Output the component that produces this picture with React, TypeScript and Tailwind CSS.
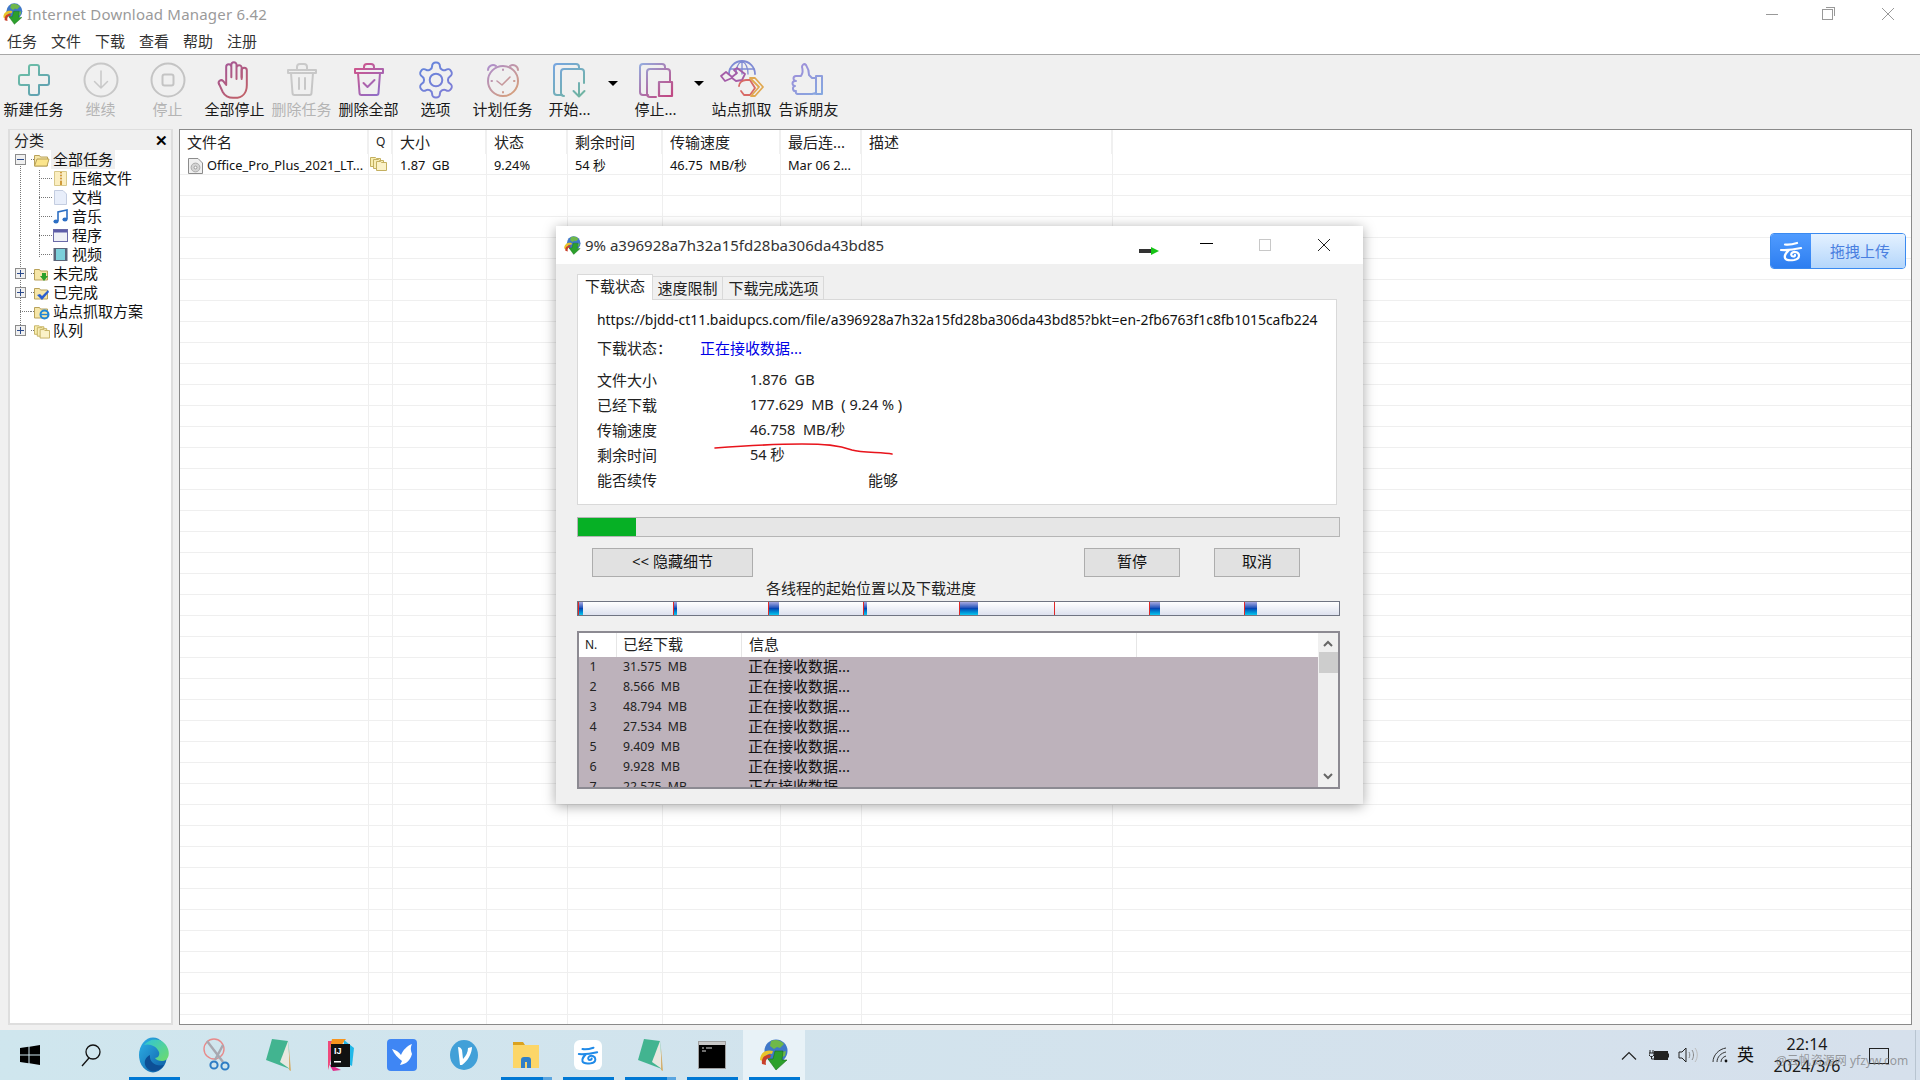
import type { ReactNode } from "react";

// --- toolbar icons: thin outlines with a two-colour gradient ---
const Grad = ({ id, from, to, size = 40, children }: { id: string; from: string; to: string; size?: number; children: ReactNode }) => (
  <svg width={size} height={size} viewBox="0 0 40 40" fill="none" stroke={`url(#${id})`} strokeWidth="2" strokeLinecap="round" strokeLinejoin="round">
    <defs>
      <linearGradient id={id} gradientUnits="userSpaceOnUse" x1="0" y1="2" x2="30" y2="38">
        <stop offset="0" stopColor={from} />
        <stop offset="1" stopColor={to} />
      </linearGradient>
    </defs>
    {children}
  </svg>
);

const toolIcons: Record<string, ReactNode> = {
  add: (
    <Grad id="g-add" from="#6fc8a2" to="#5f9cb4">
      <path d="M17 5h6a2 2 0 0 1 2 2v8h8a2 2 0 0 1 2 2v6a2 2 0 0 1-2 2h-8v8a2 2 0 0 1-2 2h-6a2 2 0 0 1-2-2v-8H7a2 2 0 0 1-2-2v-6a2 2 0 0 1 2-2h8V7a2 2 0 0 1 2-2z" />
    </Grad>
  ),
  resume: (
    <Grad id="g-res" from="#c8c8c8" to="#c8c8c8">
      <circle cx="20" cy="20" r="16.5" />
      <path d="M20 11v17M13.5 21.5 20 28l6.5-6.5" strokeWidth="1.5" />
    </Grad>
  ),
  stop: (
    <Grad id="g-stop" from="#c4c4c4" to="#c4c4c4">
      <circle cx="20" cy="20" r="16.5" />
      <rect x="14.5" y="14.5" width="11" height="11" rx="2" />
    </Grad>
  ),
  hand: (
    <Grad id="g-hand" from="#a0559c" to="#dc6a3c">
      <g transform="translate(0 0) scale(1.72)" strokeWidth="1.16">
        <path d="M15.5 11V4.5a1.5 1.5 0 0 0-3 0V11M12.5 10V2.8a1.5 1.5 0 0 0-3 0V10M9.5 10V4a1.5 1.5 0 0 0-3 0v10.5l-1.8-2.3a1.5 1.5 0 0 0-2.3 1.9" />
        <path d="M15.5 10V6a1.5 1.5 0 0 1 3 0v8.5c0 4.5-2.5 7.5-7 7.5h-1c-3 0-4.8-1.2-6-3.4L2.4 14" />
      </g>
    </Grad>
  ),
  del: (
    <Grad id="g-del" from="#cdcdcd" to="#c4c4c4">
      <path d="M6 10h28v3H6zM9 13l1.5 20a2 2 0 0 0 2 2h15a2 2 0 0 0 2-2L31 13M15 10V7a3 3 0 0 1 3-3h4a3 3 0 0 1 3 3v3" />
      <path d="M17 18v11M23 18v11" />
    </Grad>
  ),
  delAll: (
    <Grad id="g-dela" from="#dc4f7e" to="#8c70cc">
      <path d="M6 9h28v4H6zM9 13l1.5 20a2 2 0 0 0 2 2h15a2 2 0 0 0 2-2L31 13M15 9V7a3 3 0 0 1 3-3h4a3 3 0 0 1 3 3v2" />
      <path d="m14.5 23 4 4 7-7" />
    </Grad>
  ),
  gear: (
    <Grad id="g-gear" from="#5f86dc" to="#9a78d2">
      <g transform="translate(-1 -1) scale(1.75)" strokeWidth="1.14">
        <path d="M12.22 2h-.44a2 2 0 0 0-2 2v.18a2 2 0 0 1-1 1.73l-.43.25a2 2 0 0 1-2 0l-.15-.08a2 2 0 0 0-2.73.73l-.22.38a2 2 0 0 0 .73 2.73l.15.1a2 2 0 0 1 1 1.72v.51a2 2 0 0 1-1 1.74l-.15.09a2 2 0 0 0-.73 2.73l.22.38a2 2 0 0 0 2.73.73l.15-.08a2 2 0 0 1 2 0l.43.25a2 2 0 0 1 1 1.73V20a2 2 0 0 0 2 2h.44a2 2 0 0 0 2-2v-.18a2 2 0 0 1 1-1.73l.43-.25a2 2 0 0 1 2 0l.15.08a2 2 0 0 0 2.73-.73l.22-.39a2 2 0 0 0-.73-2.73l-.15-.08a2 2 0 0 1-1-1.74v-.5a2 2 0 0 1 1-1.74l.15-.09a2 2 0 0 0 .73-2.73l-.22-.38a2 2 0 0 0-2.73-.73l-.15.08a2 2 0 0 1-2 0l-.43-.25a2 2 0 0 1-1-1.73V4a2 2 0 0 0-2-2z" />
        <circle cx="12" cy="12" r="3.6" />
      </g>
    </Grad>
  ),
  clock: (
    <Grad id="g-clock" from="#a88cd8" to="#d8a078">
      <circle cx="20" cy="21" r="15" />
      <path d="M5 10a5 5 0 0 1 8-4M35 10a5 5 0 0 0-8-4" />
      <path d="m14 21 5 4 8-8" strokeWidth="1.6" />
      <path d="M20 9.5v.5M20 32v.5M8.5 21h.5M31 21h.5" />
    </Grad>
  ),
  start: (
    <Grad id="g-start" from="#78a4e6" to="#6fb4a0">
      <path d="M12 35H7a3 3 0 0 1-3-3V7a3 3 0 0 1 3-3h19a3 3 0 0 1 3 3v2" />
      <path d="M14 36a3 3 0 0 1-3-3V12a3 3 0 0 1 3-3h17a3 3 0 0 1 3 3v11" />
      <path d="M29 23v13M23.5 31l5.5 5.5 5.5-5.5" />
    </Grad>
  ),
  halt: (
    <Grad id="g-halt" from="#90b4e6" to="#c04a84">
      <path d="M12 35H7a3 3 0 0 1-3-3V7a3 3 0 0 1 3-3h19a3 3 0 0 1 3 3v2" />
      <path d="M20 37h-6a3 3 0 0 1-3-3V12a3 3 0 0 1 3-3h17a3 3 0 0 1 3 3v9" />
      <rect x="23" y="22" width="13" height="14" strokeWidth="2.2" />
    </Grad>
  ),
  site: (
    <svg width="48" height="40" viewBox="0 0 48 40" fill="none" strokeWidth="1.8" strokeLinecap="round" strokeLinejoin="round">
      <g stroke="#7f8bd4">
        <path d="M11 14a13 13 0 0 1 26 0" />
        <path d="M24 1c-5 3-6 8-6 13M24 1c5 3 6 8 6 13M24 1v13M12 9h24" strokeWidth="1.3" />
      </g>
      <path d="M3 16 8 12l6 5 5-4-3-3 3-2 8 6-3 6-6 1-4-3-7 3z" stroke="#a45ca8" />
      <path d="M21 26c0-3 3-6 7-6h4l5 8-5 7h-6l-3-4" stroke="#d86a66" />
      <path d="m32 18 9 9-8 9h4l8-9-8-9z" stroke="#e0a850" />
    </svg>
  ),
  like: (
    <Grad id="g-like" from="#a48ad8" to="#84a8e0">
      <path d="M27 16h6v18h-6zM27 18h-4l-3-3c0-3-1-7-3-10-2-2-4 0-4 2 1 3 1 6-1 9H7a2 2 0 0 0 0 5h-1a2 2 0 0 0 0 5 2 2 0 0 0 1 5 2 2 0 0 0 2 3h14l4-1" />
    </Grad>
  ),
};

const IdmLogo = ({ size = 20 }: { size?: number }) => (
  <svg width={size} height={size} viewBox="0 0 32 32">
    <circle cx="18" cy="12" r="11.5" fill="#3f78c8" />
    <path d="M13 2c4-2 10-1 13 3l-4 4-3-1-3 2-4-3zM24 13l4-1-1 5-3 1z" fill="#6fb84a" />
    <path d="M2 21C2 13 9 10 15 12l-1 3C10 14 6 17 7 23z" fill="#e9c42a" />
    <path d="M4 25C3 19 7 15 13 16l-1 3c-3 0-5 2-4 7z" fill="#c8402a" />
    <path d="M17 12h8l-1 9h5l-11 10-8-11 5 0z" fill="#2ca02c" stroke="#1c6e1c" strokeWidth="0.6" />
  </svg>
);

const CloudGlyph = ({ color, size = 24 }: { color: string; size?: number }) => (
  <svg width={size} height={size} viewBox="0 0 24 24" fill="none" stroke={color} strokeWidth="2.2" strokeLinecap="round">
    <path d="M6 5.5c4 .6 8-.2 12-1.5M2 11c6 .4 13-.4 20-2M10 11c-3 3-5 5-4 8 1 2.5 5 2.5 9 2 3-.5 5-2 5-4.5 0-3-4-4.5-6.5-3-2 1.2-1.5 4 .5 4 1.2 0 2-.8 2-1.6" />
  </svg>
);

// --- tree icons ---
const Folder = ({ open, children }: { open?: boolean; children?: ReactNode }) => (
  <svg width="16" height="16" viewBox="0 0 16 16">
    <path d="M.5 3.5h5l1 1.5h7v9H.5z" fill="#f6e6a8" stroke="#b9a25a" />
    {open && <path d="M.5 14 3 7h12l-2 7z" fill="#fbe58c" stroke="#b9a25a" />}
    {children}
  </svg>
);

const treeIcons: Record<string, ReactNode> = {
  all: <Folder open />,
  zip: (
    <svg width="13" height="15" viewBox="0 0 13 15">
      <path d="M.5.5h12v14H.5z" fill="#fbeec0" stroke="#d8c88a" />
      <path d="M6 1h2v13H6z" fill="#d09a3a" />
      <path d="M6 3h2M6 6h2M6 9h2" stroke="#fff" />
    </svg>
  ),
  doc: (
    <svg width="13" height="15" viewBox="0 0 13 15">
      <path d="M.5.5H9L12.5 4v10.5H.5z" fill="#e8eefa" stroke="#c4cde0" />
    </svg>
  ),
  music: (
    <svg width="15" height="15" viewBox="0 0 15 15">
      <path d="M5 12V3l9-2v9" fill="none" stroke="#2d6fc4" strokeWidth="1.6" />
      <ellipse cx="3" cy="12.5" rx="2.6" ry="1.9" fill="#2d6fc4" />
      <ellipse cx="12" cy="10.5" rx="2.6" ry="1.9" fill="#2d6fc4" />
    </svg>
  ),
  app: (
    <svg width="15" height="13" viewBox="0 0 15 13">
      <rect x=".5" y=".5" width="14" height="12" fill="#eef0f6" stroke="#6a6aa8" />
      <rect x="1" y="1" width="13" height="2.5" fill="#5c5ca8" />
    </svg>
  ),
  video: (
    <svg width="15" height="15" viewBox="0 0 15 15">
      <rect x=".5" y="1" width="14" height="13" fill="#5a6478" />
      <rect x="3" y="2" width="9" height="11" fill="#7cd0da" />
    </svg>
  ),
  undone: (
    <Folder>
      <path d="M8 7h4v3h2l-4 5-4-5h2z" fill="#2ca02c" />
    </Folder>
  ),
  done: (
    <Folder>
      <path d="m3 10 3-1 2 2 6-6 1 2-7 8z" fill="#2a5fd0" />
    </Folder>
  ),
  grab: (
    <Folder>
      <circle cx="10.5" cy="10.5" r="4" fill="none" stroke="#1f86d8" strokeWidth="2" />
      <path d="M7 10.5h7" stroke="#1f86d8" strokeWidth="1.4" />
    </Folder>
  ),
  queue: (
    <svg width="17" height="16" viewBox="0 0 17 16">
      <path d="M.5 2.5h5l1 1h4v8H.5z" fill="#f8eeb0" stroke="#c4b060" />
      <path d="M3.5 4.5h5l1 1h4v8h-10z" fill="#f8eeb8" stroke="#c4b060" />
      <path d="M6.5 6.5h4l1 1h5v8h-10z" fill="#fbf2c8" stroke="#c4b060" />
    </svg>
  ),
};

const Expander = ({ open }: { open?: boolean }) => (
  <span className="relative z-10 flex h-[11px] w-[11px] shrink-0 items-center justify-center border border-[#8c8c8c] bg-[#f0f0f0]">
    <span className="absolute h-px w-[7px] bg-[#2b4a8c]" />
    {!open && <span className="absolute h-[7px] w-px bg-[#2b4a8c]" />}
  </span>
);

const treeRows = [
  { label: "全部任务", icon: "all", exp: "open", selected: true },
  { label: "压缩文件", icon: "zip", child: true },
  { label: "文档", icon: "doc", child: true },
  { label: "音乐", icon: "music", child: true },
  { label: "程序", icon: "app", child: true },
  { label: "视频", icon: "video", child: true },
  { label: "未完成", icon: "undone", exp: "closed" },
  { label: "已完成", icon: "done", exp: "closed" },
  { label: "站点抓取方案", icon: "grab" },
  { label: "队列", icon: "queue", exp: "closed" },
];

const Sidebar = () => (
  <aside className="ml-2 flex w-[165px] flex-col border-2 border-t-1 border-[#dedede] bg-white">
    <div className="flex h-[20px] items-center justify-between bg-[#f0f0f0] pl-[4px] pr-[3px] text-[15px] text-[#222]">
      <span>分类</span>
      <span className="text-[15px] font-bold leading-none text-black">✕</span>
    </div>
    <div className="relative text-[15px] text-[#111]">
      <span className="absolute left-[10px] top-[14px] h-[163px] border-l border-dotted border-[#777]" />
      <span className="absolute left-[29px] top-[20px] h-[87px] border-l border-dotted border-[#777]" />
      {treeRows.map((r) => (
        <div key={r.label} className="flex h-[19px] items-center">
          {r.child ? (
            <>
              <span className="ml-[29px] w-[13px] shrink-0 border-b border-dotted border-[#777]" />
              <span className="flex w-[16px] shrink-0 justify-center">{treeIcons[r.icon]}</span>
              <span className="ml-[4px] leading-none">{r.label}</span>
            </>
          ) : (
            <>
              <span className="ml-[5px] flex w-[16px] shrink-0 items-center">
                {r.exp ? <Expander open={r.exp === "open"} /> : <span className="ml-[5px] w-[11px] border-b border-dotted border-[#777]" />}
              </span>
              <span className="w-[3px] shrink-0 border-b border-dotted border-[#777]" />
              <span className="flex w-[16px] shrink-0 justify-center">{treeIcons[r.icon]}</span>
              <span className={`ml-[1px] px-[2px] leading-[19px] ${r.selected ? "bg-[#efefef]" : ""}`}>{r.label}</span>
            </>
          )}
        </div>
      ))}
    </div>
  </aside>
);

// --- download list ---
const cols = [
  { w: "w-[189px]", h: "文件名" },
  { w: "w-[24px]", h: "Q" },
  { w: "w-[94px]", h: "大小" },
  { w: "w-[81px]", h: "状态" },
  { w: "w-[95px]", h: "剩余时间" },
  { w: "w-[118px]", h: "传输速度" },
  { w: "w-[81px]", h: "最后连..." },
  { w: "w-[251px]", h: "描述" },
];

const CdFile = () => (
  <svg width="15" height="16" viewBox="0 0 15 16" className="shrink-0">
    <path d="M.5.5H10L14.5 5v10.5H.5z" fill="#f0f0f0" stroke="#8c8c8c" />
    <circle cx="7.5" cy="9.5" r="4.4" fill="#d4d4d4" stroke="#aaa" />
    <circle cx="7.5" cy="9.5" r="1.4" fill="#fff" stroke="#999" />
  </svg>
);

const DownloadList = () => {
  const first = ["", "", "1.87  GB", "9.24%", "54 秒", "46.75  MB/秒", "Mar 06 2..."];
  return (
    <main className="ml-[6px] mr-[8px] flex-1 overflow-hidden border border-[#8a8a8a] bg-white">
      <div className="flex h-[24px] text-[15px] text-[#222]">
        {cols.map((c, i) => (
          <div key={c.h} className={`${c.w} flex shrink-0 items-center border-r-2 border-[#f0f0f0] pl-[7px] ${i === 1 ? "pl-[6px] text-[12px]" : ""}`}>
            {c.h}
          </div>
        ))}
      </div>
      <div className="flex h-[21px] border-b border-[#efefef] text-[12.8px] text-[#111]">
        {cols.map((c, i) => (
          <div key={c.h} className={`${c.w} flex shrink-0 items-center overflow-hidden whitespace-pre border-r border-[#efefef] pl-[7px] pt-[3px] ${i === 1 ? "!pl-[1px] !pt-0 pb-[3px]" : ""}`}>
            {i === 0 && (
              <span className="flex items-center gap-[4px] pl-[1px]">
                <CdFile />
                Office_Pro_Plus_2021_LT...
              </span>
            )}
            {i === 1 && treeIcons.queue}
            {i > 1 && first[i]}
          </div>
        ))}
      </div>
      {Array.from({ length: 41 }, (_, n) => (
        <div key={n} className="flex h-[21px] border-b border-[#efefef]">
          {cols.map((c) => (
            <div key={c.h} className={`${c.w} shrink-0 border-r border-[#efefef]`} />
          ))}
        </div>
      ))}
    </main>
  );
};

// --- dialog ---
const infoRows = [
  ["文件大小", "1.876  GB"],
  ["已经下载", "177.629  MB  ( 9.24 % )"],
  ["传输速度", "46.758  MB/秒"],
  ["剩余时间", "54 秒"],
];

const threads = [
  { fill: 5 },
  { fill: 4 },
  { fill: 11 },
  { fill: 4 },
  { fill: 19 },
  { fill: 1 },
  { fill: 11 },
  { fill: 13 },
];

const workers = [
  ["1", "31.575  MB"],
  ["2", "8.566  MB"],
  ["3", "48.794  MB"],
  ["4", "27.534  MB"],
  ["5", "9.409  MB"],
  ["6", "9.928  MB"],
  ["7", "22.575  MB"],
];

const GreyButton = ({ w, children }: { w: string; children: ReactNode }) => (
  <div className={`${w} flex h-[29px] items-center justify-center border border-[#adadad] bg-[#e1e1e1] pb-[2px] text-[15px] text-[#111]`}>{children}</div>
);

const Dialog = () => (
  <section className="absolute left-[556px] top-[226px] flex h-[578px] w-[807px] flex-col bg-[#f0f0f0] shadow-[0_2px_12px_rgba(0,0,0,0.35)]">
    <header className="relative flex h-[38px] items-center bg-white pl-[7px]">
      <IdmLogo size={19} />
      <span className="ml-[3px] text-[15px] text-[#333]">9% a396928a7h32a15fd28ba306da43bd85</span>
      <span className="absolute left-[583px] top-[23px] h-[4px] w-[14px] bg-[#333]" />
      <span className="absolute left-[595px] top-[21px] h-0 w-0 border-y-[4px] border-l-[8px] border-y-transparent border-l-[#16c416]" />
      <span className="absolute left-[644px] top-[17px] h-px w-[13px] bg-black" />
      <span className="absolute left-[703px] top-[13px] h-[12px] w-[12px] border border-[#c8c8c8]" />
      <svg className="absolute left-[761px] top-[12px]" width="14" height="14" viewBox="0 0 14 14" stroke="#222" strokeWidth="1">
        <path d="m1 1 12 12M13 1 1 13" />
      </svg>
    </header>

    <div className="flex flex-col pl-[21px] pr-[23px] pt-[10px]">
      <div className="relative z-10 flex h-[26px] items-end text-[15px] text-[#222]">
        <div className="flex h-[26px] w-[76px] items-center justify-center border border-b-0 border-[#d9d9d9] bg-white pb-[3px]">下载状态</div>
        <div className="flex h-[24px] w-[70px] items-center justify-center border-y border-r border-[#d9d9d9] bg-[#f0f0f0]">速度限制</div>
        <div className="flex h-[24px] w-[101px] items-center justify-center border-y border-r border-[#d9d9d9] bg-[#f0f0f0] pl-[1px]">下载完成选项</div>
      </div>
      <div className="-mt-px h-[206px] w-[760px] border border-[#d9d9d9] bg-white pl-[19px] pt-[9px] text-[15px] text-[#222]">
        <div className="h-[22px] w-[724px] overflow-hidden whitespace-nowrap text-[13.9px] leading-[22px] text-[#111]">
          https://bjdd-ct11.baidupcs.com/file/a396928a7h32a15fd28ba306da43bd85?bkt=en-2fb6763f1c8fb1015cafb224
        </div>
        <div className="mt-[6px] flex h-[22px] items-center">
          <span className="w-[103px]">下载状态：</span>
          <span className="text-[#0000e6]">正在接收数据...</span>
        </div>
        <div className="mt-[9px]">
          {infoRows.map(([k, v]) => (
            <div key={k} className="flex h-[25px] items-center">
              <span className="w-[153px] pb-[1px]">{k}</span>
              <span className="whitespace-pre pb-[1px] text-[14.5px]">{v}</span>
            </div>
          ))}
          <div className="flex h-[25px] items-center">
            <span className="w-[271px] pb-[1px]">能否续传</span>
            <span className="pb-[1px]">能够</span>
          </div>
        </div>
      </div>

      <div className="mt-[12px] h-[20px] border border-[#b5b5b5] bg-[#e6e6e6]">
        <div className="h-full w-[58px] bg-[#06b025]" />
      </div>

      <div className="mt-[11px] flex h-[29px] pl-[15px]">
        <GreyButton w="w-[161px]">&lt;&lt; 隐藏细节</GreyButton>
        <div className="ml-[331px]">
          <GreyButton w="w-[96px]">暂停</GreyButton>
        </div>
        <div className="ml-[34px]">
          <GreyButton w="w-[86px]">取消</GreyButton>
        </div>
      </div>

      <div className="flex h-[24px] items-center pb-[2px] pl-[189px] text-[15px] text-[#222]">各线程的起始位置以及下载进度</div>

      <div className="flex h-[15px] overflow-hidden border border-[#6f7482] bg-linear-to-b from-white to-[#dde1ee]">
        {threads.map((t, i) => (
          <div key={i} className="flex-1">
            <div
              className="h-full border-l border-[#e02828] bg-linear-to-b from-[#a9a9e0] via-[#0646b4] to-[#14c8ee]"
              style={{ width: t.fill }}
            />
          </div>
        ))}
      </div>

      <div className="mt-[15px] flex h-[158px] overflow-hidden border-2 border-[#8c8a92] bg-white">
        <div className="flex-1 overflow-hidden">
          <div className="flex h-[24px] text-[15px] text-[#222]">
            <div className="flex w-[38px] items-center border-r border-[#e6e6e6] pl-[6px] text-[12px]">N.</div>
            <div className="flex w-[125px] items-center border-r border-[#e6e6e6] pb-[2px] pl-[6px]">已经下载</div>
            <div className="flex w-[395px] items-center border-r border-[#e6e6e6] pb-[2px] pl-[7px]">信息</div>
          </div>
          <div className="h-[130px] overflow-hidden bg-[#bdb2bb]">
            {workers.map(([n, v]) => (
              <div key={n} className="flex h-[20px] items-center text-[#222]">
                <span className="w-[37px] pr-[9px] text-center text-[12.5px]">{n}</span>
                <span className="w-[125px] whitespace-pre pl-[7px] pt-[1px] text-[12.3px]">{v}</span>
                <span className="pb-[1px] pl-[7px] text-[15px] text-[#111]">正在接收数据...</span>
              </div>
            ))}
          </div>
        </div>
        <div className="flex w-[20px] flex-col items-center bg-[#f0f0f0]">
          <svg className="mt-[6px]" width="10" height="8" viewBox="0 0 10 8" fill="none" stroke="#666" strokeWidth="2">
            <path d="m1 7 4-4 4 4" />
          </svg>
          <div className="mt-[5px] h-[21px] w-[19px] bg-[#cdcdcd]" />
          <div className="flex-1" />
          <svg className="mb-[6px]" width="10" height="8" viewBox="0 0 10 8" fill="none" stroke="#666" strokeWidth="2">
            <path d="m1 1 4 4 4-4" />
          </svg>
        </div>
      </div>
    </div>
  </section>
);

// --- taskbar ---
const taskIcons: { key: string; icon: ReactNode; bar?: "run" | "multi"; active?: boolean }[] = [
  {
    key: "edge",
    bar: "run",
    icon: (
      <svg width="32" height="36" viewBox="0 0 32 36">
        <defs>
          <linearGradient id="edge-a" x1="0" y1="0" x2="1" y2="1">
            <stop offset="0" stopColor="#2fb3e8" />
            <stop offset="1" stopColor="#0c59a4" />
          </linearGradient>
          <linearGradient id="edge-b" x1="0" y1="0" x2="1" y2="1">
            <stop offset="0" stopColor="#2fc4d8" />
            <stop offset="1" stopColor="#6fdc6a" />
          </linearGradient>
        </defs>
        <ellipse cx="15" cy="18" rx="14" ry="17.5" fill="url(#edge-a)" />
        <path d="M6 8c6-8 20-8 24 4 2 6 0 12-6 12-3 0-6-1-7-3 3 0 5-3 4-6-2-6-10-9-15-7z" fill="url(#edge-b)" />
        <path d="M12 18c-1 7 6 12 14 10-3 5-9 7-13 6-7-3-9-12-1-16z" fill="#0d4f96" />
      </svg>
    ),
  },
  {
    key: "snip",
    icon: (
      <svg width="30" height="34" viewBox="0 0 30 34" fill="none">
        <ellipse cx="13" cy="11" rx="10" ry="10" stroke="#e88a8a" strokeWidth="1.4" />
        <path d="M6 3 22 24M22 7 14 22" stroke="#a8a8b0" strokeWidth="2.4" />
        <circle cx="13" cy="27" r="3.6" stroke="#2d7cc4" strokeWidth="2" />
        <circle cx="24" cy="28" r="3.6" stroke="#2d7cc4" strokeWidth="2" />
      </svg>
    ),
  },
  {
    key: "notes1",
    icon: (
      <svg width="28" height="34" viewBox="0 0 28 34">
        <path d="M8 1 24 3l2 28L2 22z" fill="#42b490" />
        <path d="M24 3l2 28-10-7z" fill="#e8e8e0" />
        <path d="M25 10l2 23-2-1z" fill="#d4b070" />
      </svg>
    ),
  },
  {
    key: "idea",
    icon: (
      <svg width="32" height="34" viewBox="0 0 32 34">
        <path d="M4 3h10L8 18l-4 14z" fill="#f04a7c" />
        <path d="M8 1h14l-6 8H6z" fill="#f7941e" />
        <path d="M20 2l10 8-2 18-8-4z" fill="#22b8e8" />
        <path d="M5 26l12 6-8 1z" fill="#e0308c" />
        <rect x="7" y="6" width="19" height="23" fill="#111" />
        <text x="10" y="16" fontSize="9" fontWeight="700" fill="#fff" fontFamily="Liberation Sans, sans-serif">IJ</text>
        <rect x="10" y="23" width="7" height="1.5" fill="#fff" />
      </svg>
    ),
  },
  {
    key: "bird",
    icon: (
      <svg width="30" height="32" viewBox="0 0 30 32">
        <rect width="30" height="32" rx="4" fill="#3f86f4" />
        <path d="M5 10c4 1 7 3 9 6 2-5 6-9 11-11-2 4-1 7 0 10-2 7-6 10-12 11l2-4c-4-3-8-7-10-12z" fill="#fff" />
      </svg>
    ),
  },
  {
    key: "vee",
    icon: (
      <svg width="28" height="30" viewBox="0 0 28 30">
        <ellipse cx="14" cy="15" rx="14" ry="15" fill="#42a0d8" />
        <path d="M8 7c2 0 3 1 4 3l1 9c3-3 5-7 5-11l4-1c0 6-4 14-10 18h-2z" fill="#fff" />
      </svg>
    ),
  },
  {
    key: "files",
    bar: "multi",
    icon: (
      <svg width="28" height="28" viewBox="0 0 28 28">
        <path d="M1 1h10l2 3H1z" fill="#dba21e" />
        <rect x="1" y="4" width="26" height="23" fill="#fcd668" />
        <path d="M9 27v-8a3 3 0 0 1 3-3h4a3 3 0 0 1 3 3v8h-4v-6h-2v6z" fill="#2f7fc8" />
      </svg>
    ),
  },
  {
    key: "cloud",
    bar: "run",
    icon: (
      <div className="flex h-[30px] w-[28px] items-center justify-center rounded-[6px] bg-white">
        <CloudGlyph color="#1f8ae8" size={22} />
      </div>
    ),
  },
  {
    key: "notes2",
    bar: "multi",
    icon: (
      <svg width="28" height="34" viewBox="0 0 28 34">
        <path d="M8 1 24 3l2 28L2 22z" fill="#42b490" />
        <path d="M24 3l2 28-10-7z" fill="#e8e8e0" />
        <path d="M25 10l2 23-2-1z" fill="#d4b070" />
      </svg>
    ),
  },
  {
    key: "cmd",
    bar: "run",
    icon: (
      <svg width="28" height="28" viewBox="0 0 28 28">
        <rect x=".5" y=".5" width="27" height="27" fill="#000" stroke="#a0a0a0" />
        <rect x="1" y="1" width="26" height="3" fill="#c8c8c8" />
        <path d="M4 7h2M8 7h6M4 10h4" stroke="#ddd" />
      </svg>
    ),
  },
  { key: "idm", bar: "run", active: true, icon: <IdmLogo size={32} /> },
];

const Taskbar = () => (
  <footer className="relative flex h-[50px] shrink-0 items-stretch bg-linear-to-r from-[#cfe6ee] to-[#d6e0ec]">
    <div className="flex w-[60px] items-center justify-center">
      <svg width="20" height="20" viewBox="0 0 20 20" fill="#000">
        <path d="M0 3l8.5-1.2v7.7H0zM9.5 1.7 20 0v9.5H9.5zM0 10.5h8.5v7.7L0 17zM9.5 10.5H20V20L9.5 18.3z" />
      </svg>
    </div>
    <div className="flex w-[63px] items-center justify-center pr-[2px]">
      <svg width="22" height="24" viewBox="0 0 22 24" fill="none" stroke="#111" strokeWidth="1.3">
        <circle cx="13" cy="9" r="7" />
        <path d="M9 15 2 23" />
      </svg>
    </div>
    {taskIcons.map((t) => (
      <div key={t.key} className={`relative flex w-[62px] items-center justify-center pb-[1px] ${t.active ? "bg-[#e8f2f7]" : ""}`}>
        {t.icon}
        {t.bar && (
          <span className="absolute bottom-0 left-[6px] flex h-[3px] w-[51px] bg-[#0078d4]">
            {t.bar === "multi" && <span className="ml-auto w-[9px] bg-[#5aa5e0]" />}
          </span>
        )}
      </div>
    ))}
    <div className="flex-1" />
    <div className="flex items-center text-[#111]">
      <svg className="mr-[12px]" width="16" height="9" viewBox="0 0 16 9" fill="none" stroke="#222" strokeWidth="1.2">
        <path d="m1 8.5 7-7 7 7" />
      </svg>
      <svg className="mr-[9px]" width="20" height="12" viewBox="0 0 20 12">
        <path d="M1 1v3M4 1v3M0 4h5v2l-1.5 1.5H1.5L0 6zM2.5 7v3h3" fill="none" stroke="#222" />
        <rect x="5" y="2" width="14" height="9" fill="#222" />
        <rect x="19" y="4.5" width="1" height="4" fill="#222" />
      </svg>
      <svg className="mr-[14px]" width="20" height="16" viewBox="0 0 20 16" fill="none" stroke="#222">
        <path d="M1 5h3l4-4v14l-4-4H1z" />
        <path d="M11 5c1 2 1 4 0 6M14 3c2 3 2 7 0 10" stroke="#888" />
        <path d="M17 1c3 4 3 10 0 14" stroke="#bbb" />
      </svg>
      <svg className="mr-[9px]" width="16" height="16" viewBox="0 0 16 16" fill="none" stroke="#333">
        <path d="M1 15C1 8 7 2 14 1M5 15c0-5 4-9 9-10M9 15c0-3 2-5 5-6" />
        <circle cx="14" cy="14" r="1.4" fill="#111" stroke="none" />
      </svg>
      <span className="mr-[17px] text-[17px]">英</span>
      <div className="mr-[26px] flex w-[72px] flex-col items-center text-[16px] leading-[22px] text-[#1a1a1a]">
        <span>22:14</span>
        <span>2024/3/6</span>
      </div>
      <div className="mr-[26px] mt-[2px] h-[16px] w-[20px] border border-[#222]" />
      <div className="h-full w-px bg-[#b8c4d0]" />
      <div className="w-[4px]" />
    </div>
    <span className="absolute left-[1776px] top-[22px] whitespace-nowrap text-[12px] text-[#777]/70">@云帆资源网 yfzyw.com</span>
  </footer>
);

const toolbarItems = [
  { key: "add", label: "新建任务" },
  { key: "resume", label: "继续", off: true },
  { key: "stop", label: "停止", off: true },
  { key: "hand", label: "全部停止" },
  { key: "del", label: "删除任务", off: true },
  { key: "delAll", label: "删除全部" },
  { key: "gear", label: "选项" },
  { key: "clock", label: "计划任务" },
  { key: "start", label: "开始...", drop: true },
  { key: "halt", label: "停止...", drop: true },
  { key: "site", label: "站点抓取" },
  { key: "like", label: "告诉朋友" },
];

export default function App() {
  return (
    <div className="relative flex h-[1080px] w-[1920px] flex-col overflow-hidden bg-[#f0f0f0] font-['Noto_Sans','Noto_Sans_CJK_SC',sans-serif]">
      {/* window chrome */}
      <div className="shrink-0 border-b border-[#a8a8a8] bg-white">
        <div className="flex h-[28px] items-center pl-[2px]">
          <IdmLogo size={22} />
          <span className="ml-[3px] text-[15px] tracking-[0.2px] text-[#9a9a9a]">Internet Download Manager 6.42</span>
          <div className="flex-1" />
          <span className="mr-[44px] h-px w-[12px] bg-[#999]" />
          <span className="relative mr-[49px] h-[11px] w-[11px] border border-[#999]">
            <span className="absolute -right-[3px] -top-[3px] h-[9px] w-[9px] border-r border-t border-[#999]" />
          </span>
          <svg className="mr-[26px]" width="12" height="12" viewBox="0 0 12 12" stroke="#999">
            <path d="m0 0 12 12M12 0 0 12" />
          </svg>
        </div>
        <nav className="flex h-[26px] items-center gap-[14px] pl-[7px] text-[15px] text-[#333]">
          {["任务", "文件", "下载", "查看", "帮助", "注册"].map((m) => (
            <span key={m}>{m}</span>
          ))}
        </nav>
      </div>

      {/* toolbar */}
      <div className="flex h-[70px] shrink-0">
        {toolbarItems.map((t) => (
          <div key={t.key} className="flex">
            <div className="flex w-[67px] flex-col items-center pt-[5px]">
              <div className="flex h-[39px] items-center justify-center">{toolIcons[t.key]}</div>
              <span className={`whitespace-nowrap text-[15px] leading-[20px] ${t.off ? "text-[#b4b4b4]" : "text-[#1a1a1a]"}`}>{t.label}</span>
            </div>
            {t.drop && (
              <div className="flex w-[19px] items-center justify-center pb-[14px]">
                <span className="h-0 w-0 border-x-[5px] border-t-[5px] border-x-transparent border-t-black" />
              </div>
            )}
          </div>
        ))}
      </div>

      {/* body */}
      <div className="mb-[5px] mt-[4px] flex min-h-0 flex-1">
        <Sidebar />
        <DownloadList />
      </div>

      <Taskbar />
      <Dialog />

      {/* red pen stroke drawn over the dialog */}
      <svg className="pointer-events-none absolute left-[712px] top-[440px]" width="186" height="18" viewBox="0 0 186 18" fill="none" stroke="#e8141c" strokeWidth="1.6" strokeLinecap="round">
        <path d="M3 8C30 6 60 4 90 4c22 0 36 1 50 6 10 3 30 2 40 4" />
      </svg>

      {/* floating upload widget */}
      <div className="absolute left-[1770px] top-[233px] flex h-[36px] w-[136px] overflow-hidden rounded-[4px] border border-[#3a8af0]">
        <div className="flex w-[40px] items-center justify-center bg-linear-to-b from-[#4f9bff] to-[#2d7ef0]">
          <CloudGlyph color="#fff" size={24} />
        </div>
        <div className="flex flex-1 items-center justify-center bg-linear-to-b from-[#e4f1ff] to-[#b4d6fb] pl-[4px] text-[15px] text-[#4a7fe0]">拖拽上传</div>
      </div>
    </div>
  );
}
